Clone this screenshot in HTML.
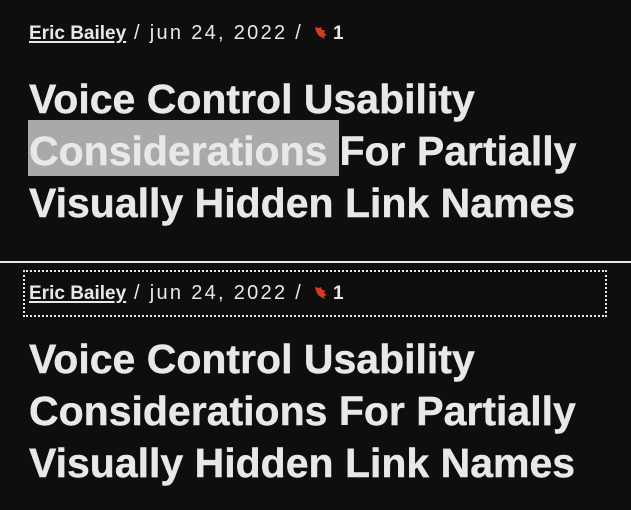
<!DOCTYPE html>
<html><head><style>
html,body{margin:0;padding:0;width:631px;height:510px;background:#0e0e0e;overflow:hidden;color:#e8e8e8;font-family:"Liberation Sans",sans-serif}
.meta{position:absolute;left:29px;font-size:19px;white-space:nowrap;line-height:22px}
.meta b{text-decoration:underline;text-underline-offset:2px;text-decoration-thickness:2px}
.meta .d{letter-spacing:2.3px;font-size:20px}
.leaf{display:inline-block;vertical-align:-2px;margin:0 4px 0 2px}
.h{position:absolute;left:29px;font-size:41px;font-weight:bold;white-space:nowrap;line-height:41px;-webkit-text-stroke:0.4px #e8e8e8}
.hl{background:#a9a9a9;padding:8px 12px 2px 1px;margin-left:-1px}
.line{position:absolute;left:0;top:261px;width:631px;height:2px;background:#e8e8e8}
.box{position:absolute;left:23px;top:270px;width:580px;height:43px;border:2px dotted #e8e8e8}
</style></head><body>
<div class="meta" style="top:22px"><b>Eric Bailey</b><span class="d"> / jun 24, 2022 / </span><svg class="leaf" width="16" height="16" viewBox="0 0 16 16"><path d="M2 2 L6 3 L8 2 L9 5 L12 5 L11 8 L14 10 L11 11 L12 14 L8 12 L5 10 L3 6 Z" fill="#d63a24"/></svg><b style="text-decoration:none">1</b></div>
<div class="h" style="top:79px">Voice Control Usability</div>
<div class="h" style="top:131px"><span class="hl">Considerations</span>For Partially</div>
<div class="h" style="top:183px">Visually Hidden Link Names</div>
<div class="line"></div>
<div class="box"></div>
<div class="meta" style="top:282px"><b>Eric Bailey</b><span class="d"> / jun 24, 2022 / </span><svg class="leaf" width="16" height="16" viewBox="0 0 16 16"><path d="M2 2 L6 3 L8 2 L9 5 L12 5 L11 8 L14 10 L11 11 L12 14 L8 12 L5 10 L3 6 Z" fill="#d63a24"/></svg><b style="text-decoration:none">1</b></div>
<div class="h" style="top:339px">Voice Control Usability</div>
<div class="h" style="top:391px">Considerations For Partially</div>
<div class="h" style="top:443px">Visually Hidden Link Names</div>
</body></html>
